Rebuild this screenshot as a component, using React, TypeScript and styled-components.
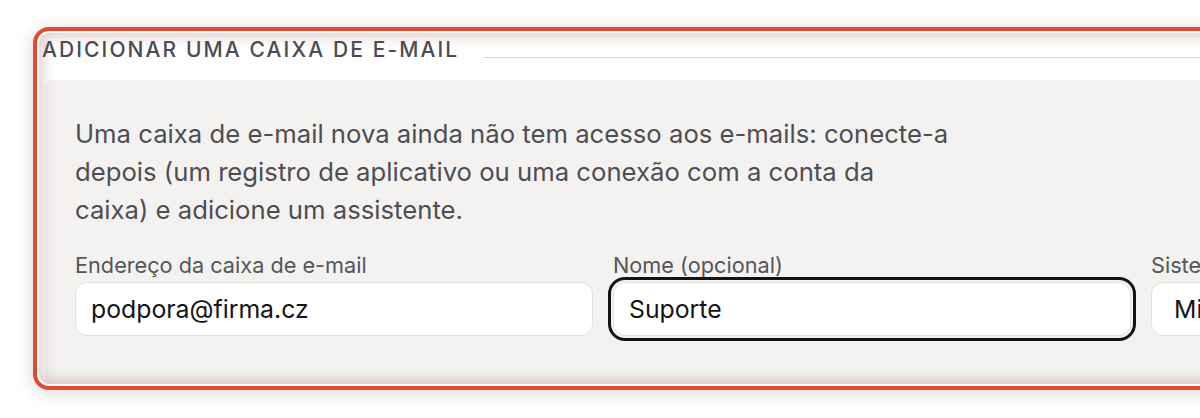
import styled, { createGlobalStyle } from 'styled-components';

const GlobalStyle = createGlobalStyle`
  html, body {
    margin: 0;
    padding: 0;
    background: #ffffff;
    overflow: hidden;
  }
  body {
    font-family: Inter, "Noto Sans", "Liberation Sans", sans-serif;
    -webkit-font-smoothing: antialiased;
  }
`;

const Page = styled.div`
  width: 1200px;
  height: 418px;
  padding: 33px 0 0 39px;
  box-sizing: border-box;
  overflow: hidden;
`;

const Card = styled.section`
  position: relative;
  width: 1400px;
  height: 351px;
  display: flex;
  flex-direction: column;
  background: #ffffff;
  border-radius: 10px;
  box-shadow:
    0 0 0 2px #ffffff,
    0 0 0 6px #e2492f,
    0 3px 18px 7px rgba(0, 0, 0, 0.14);

  &::after {
    content: '';
    position: absolute;
    inset: 0;
    border-radius: 10px;
    pointer-events: none;
    box-shadow: inset 0 0 14px 3px rgba(150, 80, 70, 0.32);
  }
`;

const LegendRow = styled.div`
  display: flex;
  align-items: flex-end;
  gap: 24px;
  padding: 5px 0 0 3px;
  height: 24px;
`;

const LegendText = styled.h2`
  margin: 0;
  font-size: 21px;
  line-height: 24px;
  font-weight: 500;
  letter-spacing: 0.1em;
  text-transform: uppercase;
  color: #4b4b52;
  white-space: nowrap;
`;

const Rule = styled.div`
  flex: 1;
  height: 1px;
  margin-bottom: 4px;
  background: #d9d9d9;
`;

const Panel = styled.div`
  flex: 1;
  margin: 18px 0 0 6px;
  padding: 35px 0 0 30px;
  background: #f3f2f0;
  border-top-left-radius: 8px;
`;

const Intro = styled.p`
  margin: 0;
  font-size: 25.7px;
  line-height: 38px;
  color: #4e4e52;
  white-space: nowrap;
`;

const Fields = styled.div`
  display: grid;
  grid-template-columns: repeat(3, 518px);
  gap: 20px;
  margin-top: 24px;
`;

const Field = styled.label`
  display: flex;
  flex-direction: column;
  gap: 5px;
`;

const FieldLabel = styled.span`
  font-size: 21.7px;
  line-height: 24px;
  color: #55555a;
  white-space: nowrap;
`;

const TextInput = styled.input<{ $focused?: boolean; $select?: boolean }>`
  box-sizing: border-box;
  height: 54px;
  padding: 0 15px 0 ${p => (p.$select ? '22px' : '15px')};
  border: 1px solid #e4e2de;
  border-radius: 12px;
  background: #ffffff;
  font-family: inherit;
  font-size: 24.8px;
  color: #141414;
  outline: ${p => (p.$focused ? '3px solid #141414' : 'none')};
  outline-offset: 2px;
`;

const App = () => {
  return (
    <Page>
      <GlobalStyle />
      <Card>
        <LegendRow>
          <LegendText>Adicionar uma caixa de e-mail</LegendText>
          <Rule />
        </LegendRow>
        <Panel>
          <Intro>
            Uma caixa de e-mail nova ainda não tem acesso aos e-mails: conecte-a
            <br />
            depois (um registro de aplicativo ou uma conexão com a conta da
            <br />
            caixa) e adicione um assistente.
          </Intro>
          <Fields>
            <Field>
              <FieldLabel>Endereço da caixa de e-mail</FieldLabel>
              <TextInput readOnly defaultValue="podpora@firma.cz" />
            </Field>
            <Field>
              <FieldLabel>Nome (opcional)</FieldLabel>
              <TextInput readOnly defaultValue="Suporte" $focused />
            </Field>
            <Field>
              <FieldLabel>Sistema de e-mail</FieldLabel>
              <TextInput readOnly defaultValue="Microsoft 365" $select />
            </Field>
          </Fields>
        </Panel>
      </Card>
    </Page>
  );
};

export default App;
